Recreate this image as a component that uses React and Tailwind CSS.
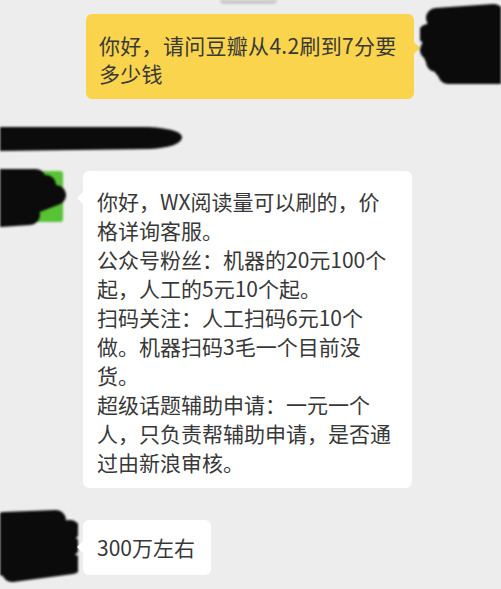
const FONT = { fontFamily: '"Noto Sans CJK SC", "Noto Sans", sans-serif' };

const Scribble = ({ className, strokes, width, height, sw = 20, children }) => (
  <svg className={`block shrink-0 ${className}`} width={width} height={height} viewBox={`0 0 ${width} ${height}`}>
    {children}
    {strokes.map((d, i) => (
      <path key={i} d={d} fill="none" stroke="#0b0b0b" strokeWidth={sw} strokeLinecap="round" strokeLinejoin="round" />
    ))}
  </svg>
);

const Lines = ({ lines }) =>
  lines.map((l, i) => (
    <div key={i} className="whitespace-nowrap">
      {l}
    </div>
  ));

export default function App() {
  const reply = [
    '你好，WX阅读量可以刷的，价',
    '格详询客服。',
    '公众号粉丝：机器的20元100个',
    '起，人工的5元10个起。',
    '扫码关注：人工扫码6元10个',
    '做。机器扫码3毛一个目前没',
    '货。',
    '超级话题辅助申请：一元一个',
    '人，只负责帮辅助申请，是否通',
    '过由新浪审核。',
  ];

  return (
    <div className="w-[501px] h-[589px] bg-[#ededed] overflow-hidden text-[#383838]" style={FONT}>
      <div className="ml-[220px] w-[57px] h-[4px] rounded-b-md bg-[#c9c9c9] blur-[1px]" />

      {/* my message */}
      <div className="flex items-start mt-[10px]">
        <div className="relative ml-[86px] w-[328px] rounded-[6px] bg-[#f9d44c] pl-[13px] pt-[17px] pb-[12px] text-[21px] leading-[28px] tracking-[0.3px]">
          <Lines lines={['你好，请问豆瓣从4.2刷到7分要', '多少钱']} />
          <div className="absolute -right-[6px] top-[27px] w-0 h-0 border-y-[7px] border-y-transparent border-l-[7px] border-l-[#f9d44c]" />
        </div>
        <Scribble
          className="-mt-[10px] ml-[6px] blur-[1px]"
          width={81}
          height={80}
          strokes={[
            'M16 14 L74 10 L20 22',
            'M8 30 L80 22 L12 40',
            'M10 46 L78 38 L14 52',
            'M16 58 L80 56 L24 64',
            'M28 70 L78 74',
          ]}
        >
          <circle cx="24" cy="33" r="5" fill="#d7a09a" />
          <ellipse cx="26" cy="72" rx="8" ry="3" fill="#d9c04a" />
        </Scribble>
      </div>

      {/* redacted name */}
      <svg className="block mt-[27px] blur-[1px]" width="184" height="26" viewBox="0 0 184 26">
        <path d="M0 1 L148 1 Q183 3 182 12 Q180 21 150 23 L0 25 Z" fill="#0b0b0b" />
      </svg>

      {/* reply */}
      <div className="flex items-start mt-[19px]">
        <Scribble
          className="-mt-[4px] blur-[1px]"
          width={70}
          height={62}
          strokes={['M0 12 L36 12', 'M0 24 L46 18 L4 32', 'M4 40 L56 28 L10 46', 'M0 50 L30 48']}
        >
          <rect x="10" y="4" width="53" height="51" rx="3" fill="#56c234" />
        </Scribble>
        <div className="relative ml-[13px] w-[329px] rounded-[6px] bg-white pl-[14px] pt-[16px] pb-[11px] text-[21px] leading-[29px]">
          <Lines lines={reply} />
          <div className="absolute -left-[6px] top-[20px] w-0 h-0 border-y-[7px] border-y-transparent border-r-[7px] border-r-white" />
        </div>
      </div>

      {/* bottom reply */}
      <div className="flex items-start mt-[32px]">
        <Scribble
          className="-mt-[10px] blur-[1px]"
          width={78}
          height={72}
          strokes={['M4 12 L56 10 L6 20', 'M2 26 L70 20 L6 34', 'M2 42 L70 36 L8 50', 'M4 56 L72 54 L12 62']}
        />
        <div className="relative ml-[5px] w-[128px] rounded-[6px] bg-white pl-[14px] pt-[13px] pb-[13px] text-[21px] leading-[29px]">
          <Lines lines={['300万左右']} />
          <div className="absolute -left-[6px] top-[20px] w-0 h-0 border-y-[7px] border-y-transparent border-r-[7px] border-r-white" />
        </div>
      </div>
    </div>
  );
}
